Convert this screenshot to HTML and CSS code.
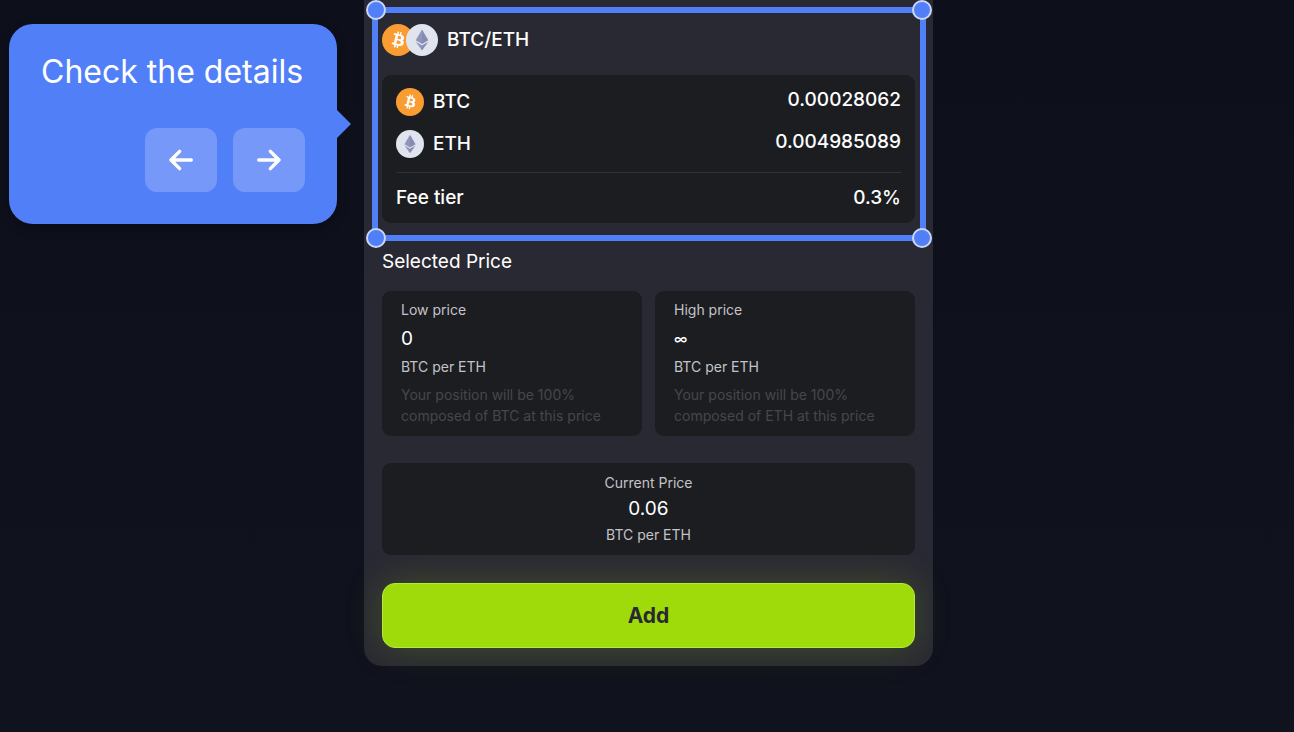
FILE: index.html
```html
<!DOCTYPE html>
<html lang="en">
<head>
<meta charset="utf-8">
<meta name="viewport" content="width=device-width, initial-scale=1">
<title>Add liquidity</title>
<link rel="stylesheet" href="styles.css">
</head>
<body>
<svg class="sprite" aria-hidden="true">
  <symbol id="btc" viewBox="0 0 32 32">
    <circle cx="16" cy="16" r="16" fill="#f99d33"/>
    <path fill="#fff" transform="translate(2.6 2.4) scale(.84)" d="M23.189 14.02c.314-2.096-1.283-3.223-3.465-3.975l.708-2.84-1.728-.43-.69 2.765c-.454-.114-.92-.22-1.385-.326l.695-2.783L15.596 6l-.708 2.839c-.376-.086-.746-.17-1.104-.26l.002-.009-2.384-.595-.46 1.846s1.283.294 1.256.312c.7.175.826.638.805 1.006l-.806 3.235c.048.012.11.03.18.057l-.183-.045-1.13 4.532c-.086.212-.303.531-.793.41.018.025-1.256-.313-1.256-.313l-.858 1.978 2.25.561c.418.105.828.215 1.231.318l-.715 2.872 1.727.43.708-2.84c.472.127.93.245 1.378.357l-.706 2.828 1.728.43.715-2.866c2.948.558 5.164.333 6.097-2.333.752-2.146-.037-3.385-1.588-4.192 1.13-.26 1.98-1.003 2.207-2.538zm-3.95 5.538c-.533 2.147-4.148.986-5.32.695l.95-3.805c1.172.293 4.929.872 4.37 3.11zm.535-5.569c-.487 1.953-3.495.96-4.47.717l.86-3.45c.975.243 4.118.696 3.61 2.733z"/>
  </symbol>
  <symbol id="eth" viewBox="0 0 32 32">
    <circle cx="16" cy="16" r="16" fill="#e0e4ee"/>
    <path fill="#9095ba" d="M16 5.5 9.7 16.2 16 20z"/>
    <path fill="#868bb2" d="M16 5.5 22.3 16.2 16 20z"/>
    <path fill="#9095ba" d="M9.7 17.8 16 21.5v5z"/>
    <path fill="#868bb2" d="M22.3 17.8 16 21.5v5z"/>
  </symbol>
</svg>
<main class="page">
  <div class="panel">
    <aside class="callout" aria-label="Tour step">
      <p class="callout-text">Check the details</p>
      <div class="callout-nav">
        <button class="nav-button" type="button" aria-label="Previous">
          <svg class="arrow" viewBox="0 0 24 24" aria-hidden="true"><path d="M22.3 12H2M10.6 3.4 2 12l8.6 8.6"/></svg>
        </button>
        <button class="nav-button" type="button" aria-label="Next">
          <svg class="arrow" viewBox="0 0 24 24" aria-hidden="true"><path d="M1.7 12H22M13.4 3.4 22 12l-8.6 8.6"/></svg>
        </button>
      </div>
    </aside>

    <section class="position">
      <div class="highlight">
        <span class="handle top left"></span>
        <span class="handle top right"></span>
        <span class="handle bottom left"></span>
        <span class="handle bottom right"></span>
      </div>
      <h2 class="pair">
        <span class="pair-icons">
          <svg class="coin-large" aria-hidden="true"><use href="#btc"/></svg>
          <svg class="coin-large" aria-hidden="true"><use href="#eth"/></svg>
        </span>
        BTC/ETH
      </h2>
      <dl class="card amounts">
        <div class="amount">
          <dt><svg class="coin" aria-hidden="true"><use href="#btc"/></svg>BTC</dt>
          <dd>0.00028062</dd>
        </div>
        <div class="amount">
          <dt><svg class="coin" aria-hidden="true"><use href="#eth"/></svg>ETH</dt>
          <dd>0.004985089</dd>
        </div>
        <div class="amount fee">
          <dt>Fee tier</dt>
          <dd>0.3%</dd>
        </div>
      </dl>
    </section>

    <section class="prices">
      <h2 class="heading">Selected Price</h2>
      <div class="range">
        <div class="card bound">
          <p class="label">Low price</p>
          <p class="value">0</p>
          <p class="label">BTC per ETH</p>
          <p class="hint">Your position will be 100% composed of BTC at this price</p>
        </div>
        <div class="card bound">
          <p class="label">High price</p>
          <p class="value infinite">∞</p>
          <p class="label">BTC per ETH</p>
          <p class="hint">Your position will be 100% composed of ETH at this price</p>
        </div>
      </div>
      <div class="card current">
        <p class="label">Current Price</p>
        <p class="value">0.06</p>
        <p class="label">BTC per ETH</p>
      </div>
    </section>

    <button class="add" type="button">Add</button>
  </div>
</main>
</body>
</html>
```
FILE: styles.css
```css
* { box-sizing: border-box; }

body {
  margin: 0;
  min-height: 100vh;
  background: linear-gradient(#0d0f1b, #10121d);
  color: #fff;
  font-family: Inter, "Liberation Sans", sans-serif;
  font-size: 19px;
  font-weight: 500;
  line-height: 24px;
}

h2, p, dl, dd { margin: 0; font-size: inherit; font-weight: inherit; }
button { border: 0; padding: 0; font: inherit; cursor: pointer; }
.sprite { position: absolute; width: 0; height: 0; }

.page {
  display: flex;
  justify-content: center;
  padding: 0 0 48px 3px;
}

.panel {
  position: relative;
  width: 100%;
  max-width: 569px;
  padding: 24px 18px 18px;
  border-radius: 0 0 18px 18px;
  background: #292933;
}

.card {
  border-radius: 9px;
  background: #1c1d21;
}

/* Tour callout */
.callout {
  position: absolute;
  top: 24px;
  right: calc(100% + 27px);
  width: 328px;
  padding: 24px 32px 32px;
  border-radius: 24px;
  background: #517ff8;
  box-shadow: 0 4px 12px rgba(0, 0, 0, .3);
}
.callout::after {
  content: "";
  position: absolute;
  top: 86px;
  left: 100%;
  border: 14px solid transparent;
  border-left-color: #517ff8;
  border-right-width: 0;
}
.callout-text {
  font-size: 32px;
  font-weight: 400;
  line-height: 48px;
  white-space: nowrap;
}
.callout-nav {
  display: flex;
  justify-content: flex-end;
  gap: 16px;
  margin-top: 32px;
}
.nav-button {
  display: grid;
  place-items: center;
  width: 72px;
  height: 64px;
  border-radius: 12px;
  background: #7699f9;
}
.arrow {
  width: 24px;
  height: 24px;
  fill: none;
  stroke: #fff;
  stroke-width: 3.4;
  stroke-linecap: round;
  stroke-linejoin: round;
}

/* Highlighted position */
.position { position: relative; }
.highlight {
  position: absolute;
  inset: -17px -11px -18px -10px;
  border: 6px solid #517ff8;
  pointer-events: none;
}
.handle {
  position: absolute;
  width: 20px;
  height: 20px;
  border: 2px solid #c9d6fa;
  border-radius: 50%;
  background: #517ff8;
}
.top { top: -13px; }
.bottom { bottom: -13px; }
.left { left: -12px; }
.right { right: -12px; }

.pair {
  display: flex;
  align-items: center;
  gap: 9px;
}
.pair-icons { display: flex; }
.coin-large { width: 32px; height: 32px; }
.coin-large + .coin-large { margin-left: -8px; }
.coin { width: 28px; height: 28px; }

.amounts {
  margin-top: 19px;
  padding: 13px 14px;
}
.amount {
  display: flex;
  justify-content: space-between;
  margin-bottom: 14px;
}
.amount dt {
  display: flex;
  align-items: center;
  gap: 9px;
}
.fee {
  margin-bottom: 0;
  padding-top: 13px;
  border-top: 1px solid #303136;
}

/* Prices */
.heading {
  margin-top: 27px;
  font-weight: 400;
}
.range {
  display: grid;
  grid-template-columns: 1fr 1fr;
  gap: 13px;
  margin-top: 17px;
}
.bound { padding: 9px 19px 10px; }
.label {
  color: #c3c4c7;
  font-size: 14px;
  font-weight: 400;
  line-height: 20px;
}
.value { font-weight: 400; }
.bound .value { margin: 7px 0 6px; }
.infinite {
  font-size: 14px;
  font-weight: 500;
}
.hint {
  max-width: 208px;
  margin-top: 7px;
  color: #46474b;
  font-size: 14px;
  font-weight: 400;
  line-height: 21px;
}
.current {
  margin-top: 27px;
  padding: 10px 18px;
  text-align: center;
}
.current .value { margin: 4px 0; }

.add {
  display: block;
  width: 100%;
  height: 65px;
  margin-top: 28px;
  border: 1px solid #b4ea3c;
  border-radius: 13px;
  background: #9fdb0a;
  box-shadow: 0 0 36px rgba(159, 219, 10, .22);
  color: #292933;
  font-size: 21px;
  font-weight: 700;
}
```
